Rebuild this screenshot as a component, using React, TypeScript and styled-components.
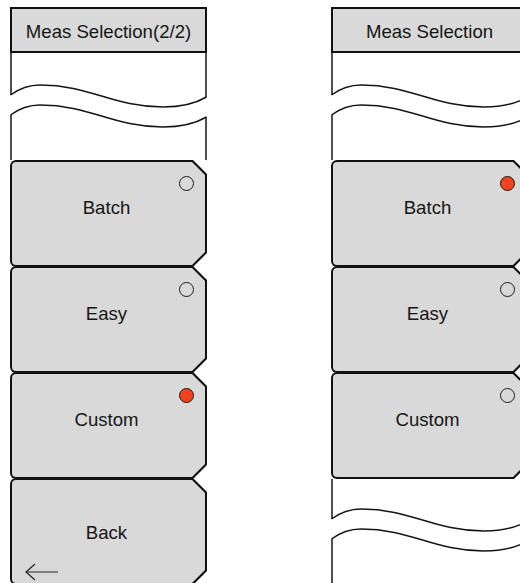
import React from 'react'
import styled, { createGlobalStyle } from 'styled-components'

const GlobalStyle = createGlobalStyle`
  html, body {
    margin: 0;
    padding: 0;
    background: #fff;
  }
  body {
    font-family: "Liberation Sans", Arial, sans-serif;
    overflow: hidden;
  }
`

const Page = styled.div`
  display: flex;
  align-items: flex-start;
  gap: 124px;
  width: 520px;
  height: 583px;
  padding: 7px 0 0 10px;
  box-sizing: border-box;
  overflow: hidden;
`

const Panel = styled.div`
  display: flex;
  flex-direction: column;
  width: 197px;
  flex-shrink: 0;
`

const Header = styled.div`
  height: 46px;
  flex-shrink: 0;
  box-sizing: border-box;
  border: 2px solid #111;
  background: #d9d9d9;
  display: flex;
  align-items: center;
  justify-content: center;
  padding-top: 3px;
  font-size: 18.6px;
  color: #161616;
  white-space: nowrap;
`

const BreakBox = styled.div<{ $h: number }>`
  height: ${(p) => p.$h}px;
  flex-shrink: 0;

  svg {
    display: block;
  }
`

const SoftKey = styled.div`
  position: relative;
  height: 107px;
  flex-shrink: 0;
  background: #111;
  border-radius: 6px 0 0 6px;
  clip-path: polygon(0 0, calc(100% - 14px) 0, 100% 14px, 100% calc(100% - 14px), calc(100% - 14px) 100%, 0 100%);
  & + & {
    margin-top: -1px;
  }

  &::before {
    content: '';
    position: absolute;
    inset: 2px;
    background: #d9d9d9;
    border-radius: 4px 0 0 4px;
    clip-path: polygon(0 0, calc(100% - 13px) 0, 100% 13px, 100% calc(100% - 13px), calc(100% - 13px) 100%, 0 100%);
  }
`

const KeyLabel = styled.div<{ $top: number }>`
  position: relative;
  padding-top: ${(p) => p.$top}px;
  text-align: center;
  font-size: 18.6px;
  color: #161616;
  padding-right: 4px;
`

const Led = styled.span<{ $on: boolean }>`
  position: absolute;
  top: 16px;
  left: 169px;
  width: 15px;
  height: 15px;
  box-sizing: border-box;
  border-radius: 50%;
  border: 1.5px solid #1a1a1a;
  background: ${(p) => (p.$on ? '#f2431e' : 'transparent')};
`

const BackArrow = styled.svg`
  position: absolute;
  left: 15px;
  bottom: 4px;
`

const Break = ({ h, top }: { h: number; top: number }) => {
  const w = 197
  const wave = (y: number) =>
    `M0.5 ${y} C10 ${y - 7} 20 ${y - 10} 30 ${y - 10} C80 ${y - 10} 103 ${y + 12} 153 ${y + 12} C175 ${y + 12} 188 ${y + 7} ${w - 0.5} ${y + 2}`
  const y1 = top
  const y2 = top + 20
  return (
    <BreakBox $h={h}>
      <svg width={w} height={h} viewBox={`0 0 ${w} ${h}`}>
        <g stroke="#151515" strokeWidth="1.5" fill="none">
          <path d={wave(y1)} />
          <path d={wave(y2)} />
          <line x1="1" y1="0" x2="1" y2={y1} />
          <line x1={w - 1} y1="0" x2={w - 1} y2={y1 + 2} />
          <line x1="1" y1={y2} x2="1" y2={h} />
          <line x1={w - 1} y1={y2 + 2} x2={w - 1} y2={h} />
        </g>
      </svg>
    </BreakBox>
  )
}

type Key = { label: string; led?: boolean; on?: boolean; back?: boolean }

const Keys = ({ keys }: { keys: Key[] }) => (
  <>
    {keys.map((k) => (
      <SoftKey key={k.label}>
        <KeyLabel $top={k.back ? 44 : 37}>{k.label}</KeyLabel>
        {k.led && <Led $on={!!k.on} />}
        {k.back && (
          <BackArrow width="34" height="18" viewBox="0 0 34 18">
            <g stroke="#222" strokeWidth="1.2" fill="none">
              <line x1="1" y1="9" x2="33" y2="9" />
              <polyline points="10,1 1,9 10,17" />
            </g>
          </BackArrow>
        )}
      </SoftKey>
    ))}
  </>
)

export default function App() {
  return (
    <>
      <GlobalStyle />
      <Page>
        <Panel>
          <Header>Meas Selection(2/2)</Header>
          <Break h={107} top={42} />
          <Keys
            keys={[
              { label: 'Batch', led: true },
              { label: 'Easy', led: true },
              { label: 'Custom', led: true, on: true },
              { label: 'Back', back: true },
            ]}
          />
        </Panel>
        <Panel>
          <Header>Meas Selection</Header>
          <Break h={107} top={42} />
          <Keys
            keys={[
              { label: 'Batch', led: true, on: true },
              { label: 'Easy', led: true },
              { label: 'Custom', led: true },
            ]}
          />
          <Break h={110} top={40} />
        </Panel>
      </Page>
    </>
  )
}
